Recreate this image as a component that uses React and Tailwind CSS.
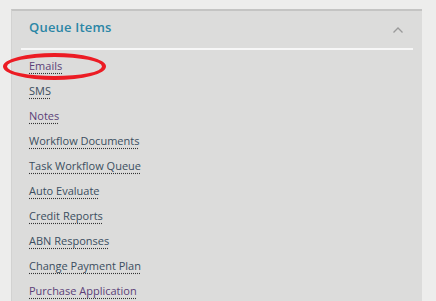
import React from "react";

const items = [
  ["Emails", true],
  ["SMS", false],
  ["Notes", true],
  ["Workflow Documents", false],
  ["Task Workflow Queue", false],
  ["Auto Evaluate", false],
  ["Credit Reports", false],
  ["ABN Responses", false],
  ["Change Payment Plan", false],
  ["Purchase Application", true],
];

export default function App() {
  return (
    <div className="relative w-[436px] h-[301px] overflow-hidden bg-[#ededec] pt-[9px] pl-[11px]" style={{ fontFamily: '"Open Sans", sans-serif' }}>
      <div className="w-[411px] h-[320px] bg-[#dcdcdb] border-t-2 border-t-[#c4c4c3] border-l border-l-[#d2d2d1] px-[9px]">
        <div className="flex items-center justify-between h-[37px] px-[8px] pb-[3px]">
          <span className="text-[13px] font-semibold text-[#2b86a6] tracking-[0.2px]">Queue Items</span>
          <svg width="12" height="8" viewBox="0 0 12 8" className="mr-[1px] mt-[3px]">
            <path d="M1.5 6.5 L6 2 L10.5 6.5" fill="none" stroke="#9a9a9a" strokeWidth="1.3" />
          </svg>
        </div>
        <div className="h-[2px] bg-[#f7f7f7]" />
        <div className="flex flex-col pt-[8px] px-[8px]">
          {items.map(([label, visited]) => (
            <div key={label} className="h-[25px] flex items-start">
              <span
                className={`text-[11px] leading-[16px] underline decoration-dotted decoration-[#333] underline-offset-[3px] ${visited ? "text-[#5b3f78]" : "text-[#3b4e60]"}`}
              >
                {label}
              </span>
            </div>
          ))}
        </div>
      </div>
      <div className="absolute left-[3px] top-[53px] w-[103px] h-[27px] rounded-[50%] border-4 border-[#ec1c24]" />
    </div>
  );
}
